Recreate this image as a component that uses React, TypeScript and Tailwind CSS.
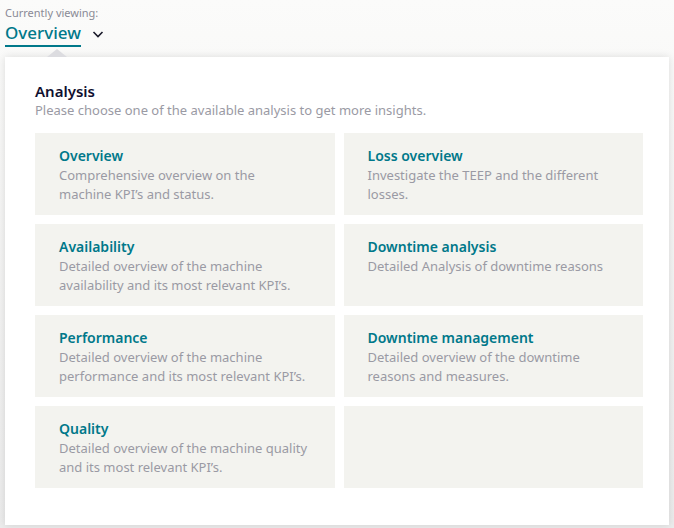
const cards: [string, string][] = [
  ["Overview", "Comprehensive overview on the machine KPI’s and status."],
  ["Loss overview", "Investigate the TEEP and the different losses."],
  ["Availability", "Detailed overview of the machine availability and its most relevant KPI’s."],
  ["Downtime analysis", "Detailed Analysis of downtime reasons"],
  ["Performance", "Detailed overview of the machine performance and its most relevant KPI’s."],
  ["Downtime management", "Detailed overview of the downtime reasons and measures."],
  ["Quality", "Detailed overview of the machine quality and its most relevant KPI’s."],
  ["", ""],
];

export default function App() {
  return (
    <div className="w-[674px] h-[528px] bg-gradient-to-b from-[#fbfbfa] to-[#ececec] pt-[6px] overflow-hidden" style={{ fontFamily: '"Noto Sans", sans-serif' }}>
      <div className="px-[5px]">
        <div className="text-[11px] leading-[14px] text-[#8a8a96]">Currently viewing:</div>
        <div className="flex items-center gap-[10px] mt-[1px]">
          <span className="text-[17px] leading-[24px] font-medium text-[#00788a] border-b-2 border-[#00788a]">Overview</span>
          <svg width="14" height="14" viewBox="0 0 14 14" fill="none" stroke="#1a1a2a" strokeWidth="1.6"><path d="M2.5 5 L7 9.5 L11.5 5" /></svg>
        </div>
      </div>
      <div className="relative mx-[5px] mt-[10px] bg-white h-[468px] shadow-[0_0_8px_rgba(0,0,0,0.12)] pl-[30px] pr-[26px] pt-[24px]">
        <div className="absolute -top-[8px] left-[42px] w-0 h-0 border-x-[10px] border-x-transparent border-b-[8px] border-b-[#dcdce0]" />
        <div className="text-[15px] leading-[20px] font-semibold text-[#101030]">Analysis</div>
        <div className="text-[13px] leading-[18px] text-[#9a9aa4]">Please choose one of the available analysis to get more insights.</div>
        <div className="grid grid-cols-2 gap-[9px] mt-[14px]">
          {cards.map(([t, d], i) => (
            <div key={i} className="h-[82px] bg-[#f3f3ef] pl-[24px] pr-[20px] pt-[13px]">
              <div className="text-[14px] leading-[20px] font-semibold text-[#00788a]">{t}</div>
              <div className="text-[13px] leading-[19px] text-[#9a9aa4] max-w-[250px]">{d}</div>
            </div>
          ))}
        </div>
      </div>
    </div>
  );
}
